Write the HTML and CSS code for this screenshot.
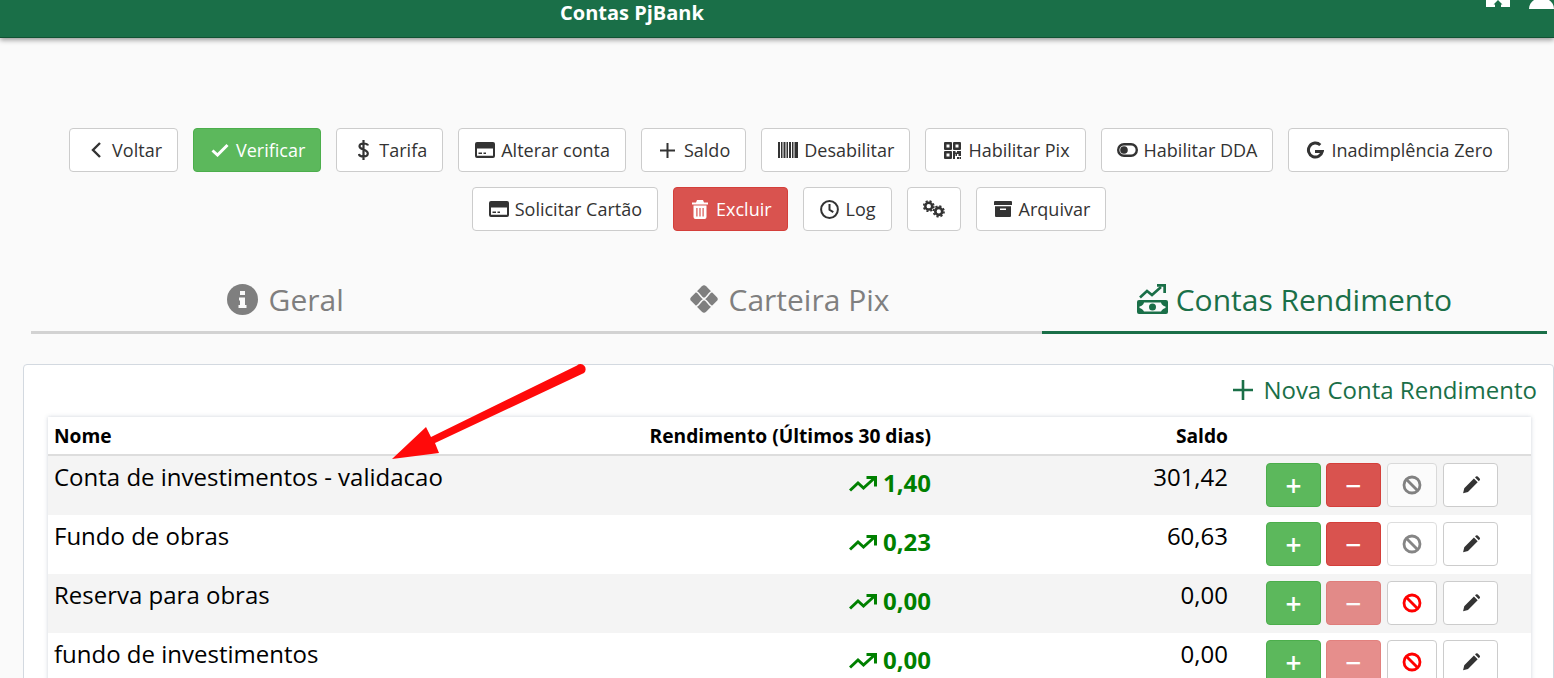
FILE: index.html
```html
<!DOCTYPE html>
<html lang="pt-BR">
<head>
  <meta charset="UTF-8">
  <title>Contas PjBank</title>
  <link rel="stylesheet" href="styles.css">
</head>
<body>
  <svg class="defs" width="0" height="0" aria-hidden="true">
    <symbol id="i-card" viewBox="0 0 20 16">
      <path fill="currentColor" fill-rule="evenodd" d="M2 0h16a2 2 0 0 1 2 2v12a2 2 0 0 1-2 2H2a2 2 0 0 1-2-2V2a2 2 0 0 1 2-2zM2 6.500v7.200h16V6.500zM3.500 10.500h3.500v1.600H3.500zM8.500 10.500h2.500v1.600H8.500z"/>
    </symbol>
    <symbol id="i-pencil" viewBox="0 0 24 24">
      <path fill="currentColor" d="M2.500 21.800l1.400-5.900L15.500 4.300l4.500 4.500L8.400 20.400zM16.900 2.900l1-1a1.600 1.600 0 0 1 2.200 0l2.300 2.300a1.600 1.600 0 0 1 0 2.200l-1 1z"/>
    </symbol>
    <symbol id="i-trend" viewBox="0 0 28 16">
      <path fill="none" stroke="currentColor" stroke-width="3" d="M1 14.500l8-7.500 5.500 5L25 2.500"/>
      <path fill="currentColor" d="M17.500 0H28v10.500h-3V3h-7.500z"/>
    </symbol>
    <symbol id="i-ban" viewBox="0 0 20 20">
      <circle cx="10" cy="10" r="8" fill="none" stroke="currentColor" stroke-width="2.800"/>
      <path stroke="currentColor" stroke-width="2.800" d="M4.500 4.500l11 11"/>
    </symbol>
  </svg>

  <header class="topbar">
    <h1 class="topbar-title">Contas PjBank</h1>
    <div class="topbar-icons">
      <svg width="24" height="8" viewBox="0 0 24 8"><path fill="#fff" d="M0 0h24v7H15V4.500h1.500L12 0 7.500 4.500H9V7H0z"/></svg>
      <svg width="25" height="9" viewBox="0 0 25 9"><path fill="#fff" d="M0 9C0 5 2 2 5 0h15c3 2 5 5 5 9z"/></svg>
    </div>
  </header>

  <main class="content">
    <div class="toolbar">
      <button class="btn">
        <span class="ico"><svg width="12" height="18" viewBox="0 0 12 18"><path fill="none" stroke="currentColor" stroke-width="2.400" d="M10 2L3 9l7 7"/></svg></span>Voltar
      </button>
      <button class="btn btn-green">
        <span class="ico"><svg width="18" height="14" viewBox="0 0 18 14"><path fill="none" stroke="currentColor" stroke-width="3" d="M1.500 7.500l5 4.500L16.500 2"/></svg></span>Verificar
      </button>
      <button class="btn">
        <span class="ico"><svg width="11" height="20" viewBox="0 0 11 20"><path fill="none" stroke="currentColor" stroke-width="2.200" d="M5.500 0v20M10 5.500C9.500 4 8 3.500 5.500 3.500 3 3.500 1.500 4.500 1.500 6.300c0 4 8.300 2.500 8.300 7.300 0 2-1.800 3-4.300 3-2.700 0-4.300-1-4.700-2.600"/></svg></span>Tarifa
      </button>
      <button class="btn">
        <span class="ico"><svg width="20" height="16"><use href="#i-card"/></svg></span>Alterar conta
      </button>
      <button class="btn">
        <span class="ico"><svg width="15" height="15" viewBox="0 0 15 15"><path stroke="currentColor" stroke-width="2" d="M7.500 0v15M0 7.500h15"/></svg></span>Saldo
      </button>
      <button class="btn">
        <span class="ico"><svg width="20" height="16" viewBox="0 0 20 16"><path fill="currentColor" d="M0 0h2v16H0zM3 0h1.500v16H3zM5.500 0h2v16h-2zM8.500 0h1.500v16H8.500zM11 0h2v16h-2zM14 0h1.500v16H14zM16.500 0h3.500v16h-3.500z"/></svg></span>Desabilitar
      </button>
      <button class="btn">
        <span class="ico"><svg width="17" height="17" viewBox="0 0 17 17"><path fill="currentColor" fill-rule="evenodd" d="M1 0h6a1 1 0 0 1 1 1v6a1 1 0 0 1-1 1H1a1 1 0 0 1-1-1V1a1 1 0 0 1 1-1zM2.500 2.500v3h3v-3zM10 0h6a1 1 0 0 1 1 1v6a1 1 0 0 1-1 1h-6a1 1 0 0 1-1-1V1a1 1 0 0 1 1-1zM11.500 2.500v3h3v-3zM1 9h6a1 1 0 0 1 1 1v6a1 1 0 0 1-1 1H1a1 1 0 0 1-1-1v-6a1 1 0 0 1 1-1zM2.500 11.500v3h3v-3zM9 9h2.500v1.500H13V9h4v5h-2.500v-2h-1.500v2H11.500v-2H11v5H9zM13 15h2v2h-2zM15.500 15H17v2h-1.500z"/></svg></span>Habilitar Pix
      </button>
      <button class="btn">
        <span class="ico"><svg width="21" height="14" viewBox="0 0 21 14"><path fill="currentColor" fill-rule="evenodd" d="M7 0h7a7 7 0 0 1 0 14H7A7 7 0 0 1 7 0zM14 2.400H7a4.600 4.600 0 0 0 0 9.200h7a4.600 4.600 0 0 0 0-9.200zM7 3.200a3.800 3.800 0 1 1 0 7.600 3.800 3.800 0 0 1 0-7.600z"/></svg></span>Habilitar DDA
      </button>
      <button class="btn">
        <span class="ico"><svg width="18" height="18" viewBox="0 0 18 18"><path fill="none" stroke="currentColor" stroke-width="3" d="M14.300 4a7 7 0 1 0 2 6.500H9"/></svg></span>Inadimplência Zero
      </button>
      <button class="btn">
        <span class="ico"><svg width="20" height="16"><use href="#i-card"/></svg></span>Solicitar Cartão
      </button>
      <button class="btn btn-red">
        <span class="ico"><svg width="16" height="19" viewBox="0 0 16 19"><path fill="currentColor" fill-rule="evenodd" d="M5 0h6l1 2.500h4v2H0v-2h4zM1.500 5.500h13V17a2 2 0 0 1-2 2h-9a2 2 0 0 1-2-2zM4.300 8v8.500h1.200V8zM7.400 8v8.500h1.200V8zM10.500 8v8.500h1.200V8z"/></svg></span>Excluir
      </button>
      <button class="btn">
        <span class="ico"><svg width="19" height="19" viewBox="0 0 19 19"><circle cx="9.500" cy="9.500" r="8.400" fill="none" stroke="currentColor" stroke-width="2"/><path fill="none" stroke="currentColor" stroke-width="2" d="M9.500 4v5.800l3.800 2.400"/></svg></span>Log
      </button>
      <button class="btn">
        <span class="ico ico-only"><svg width="23" height="18" viewBox="0 0 23 18"><circle cx="6" cy="6" r="3.600" fill="none" stroke="currentColor" stroke-width="2.600"/><circle cx="6" cy="6" r="5.300" fill="none" stroke="currentColor" stroke-width="1.800" stroke-dasharray="2.200 2"/><circle cx="16.500" cy="11.500" r="3.600" fill="none" stroke="currentColor" stroke-width="2.800"/><circle cx="16.500" cy="11.500" r="5.500" fill="none" stroke="currentColor" stroke-width="1.800" stroke-dasharray="2.300 2"/></svg></span>
      </button>
      <button class="btn">
        <span class="ico"><svg width="18" height="16" viewBox="0 0 18 16"><path fill="currentColor" fill-rule="evenodd" d="M1 0h16a1 1 0 0 1 1 1v3H0V1a1 1 0 0 1 1-1zM1 5.200h16V15a1 1 0 0 1-1 1H2a1 1 0 0 1-1-1zM6 7.500V9h6V7.500z"/></svg></span>Arquivar
      </button>
    </div>

    <nav class="tabs">
      <div class="tab">
        <svg class="tab-info" width="31" height="31" viewBox="0 0 31 31"><circle cx="15.500" cy="15.500" r="15.500" fill="currentColor"/><path fill="#fafafa" d="M13 7h5v4h-5zM12 13.500h6V21h1.500v3h-8v-3H13v-4.500h-1z"/></svg>
        Geral
      </div>
      <div class="tab">
        <svg width="32" height="32" viewBox="0 0 32 32"><rect x="5.500" y="5.500" width="21" height="21" rx="3" fill="currentColor" transform="rotate(45 16 16)"/><path fill="none" stroke="#fafafa" stroke-width="1.500" d="M7.500 8.500C11 8.500 13 15.500 16 15.500S21 8.500 24.500 8.500M7.500 23.500C11 23.500 13 16.500 16 16.500S21 23.500 24.500 23.500"/></svg>
        Carteira Pix
      </div>
      <div class="tab tab-active">
        <svg width="31" height="30" viewBox="0 0 31 30"><path fill="none" stroke="currentColor" stroke-width="2.600" d="M3 13.500l7-6.500 5 4 9-8"/><path fill="currentColor" d="M20 0h9v9h-2.700V2.700H20z"/><path fill="currentColor" fill-rule="evenodd" d="M2 16h27a2 2 0 0 1 2 2v10a2 2 0 0 1-2 2H2a2 2 0 0 1-2-2V18a2 2 0 0 1 2-2zM7 18.500c-.5 2-2 3.500-4.500 4v1.500c2 .5 3.500 1.500 4.500 3.500h17c1-2 2.500-3 4.500-3.500v-1.500c-2.500-.5-4-2-4.500-4zM15.500 19.500a3.500 3.500 0 1 1 0 7 3.500 3.500 0 0 1 0-7z"/></svg>
        Contas Rendimento
      </div>
    </nav>

    <section class="panel">
      <div class="panel-actions">
        <a class="new-link">
          <svg width="20" height="20" viewBox="0 0 20 20"><path stroke="currentColor" stroke-width="2.600" d="M10 0v20M0 10h20"/></svg>
          Nova Conta Rendimento
        </a>
      </div>
      <table class="accounts">
        <colgroup>
          <col class="col-name"><col class="col-yield"><col class="col-balance"><col>
        </colgroup>
        <thead>
          <tr><th>Nome</th><th class="num">Rendimento (Últimos 30 dias)</th><th class="num">Saldo</th><th></th></tr>
        </thead>
        <tbody>
          <tr>
            <td>Conta de investimentos - validacao</td>
            <td class="num yield"><svg width="28" height="16"><use href="#i-trend"/></svg> 1,40</td>
            <td class="num">301,42</td>
            <td><div class="row-actions">
              <button class="rbtn btn-green">+</button>
              <button class="rbtn btn-red">−</button>
              <button class="rbtn rbtn-ban off"><svg width="20" height="20"><use href="#i-ban"/></svg></button>
              <button class="rbtn"><svg width="20" height="20"><use href="#i-pencil"/></svg></button>
            </div></td>
          </tr>
          <tr>
            <td>Fundo de obras</td>
            <td class="num yield"><svg width="28" height="16"><use href="#i-trend"/></svg> 0,23</td>
            <td class="num">60,63</td>
            <td><div class="row-actions">
              <button class="rbtn btn-green">+</button>
              <button class="rbtn btn-red">−</button>
              <button class="rbtn rbtn-ban off"><svg width="20" height="20"><use href="#i-ban"/></svg></button>
              <button class="rbtn"><svg width="20" height="20"><use href="#i-pencil"/></svg></button>
            </div></td>
          </tr>
          <tr>
            <td>Reserva para obras</td>
            <td class="num yield"><svg width="28" height="16"><use href="#i-trend"/></svg> 0,00</td>
            <td class="num">0,00</td>
            <td><div class="row-actions">
              <button class="rbtn btn-green">+</button>
              <button class="rbtn btn-red faded">−</button>
              <button class="rbtn rbtn-ban danger"><svg width="20" height="20"><use href="#i-ban"/></svg></button>
              <button class="rbtn"><svg width="20" height="20"><use href="#i-pencil"/></svg></button>
            </div></td>
          </tr>
          <tr>
            <td>fundo de investimentos</td>
            <td class="num yield"><svg width="28" height="16"><use href="#i-trend"/></svg> 0,00</td>
            <td class="num">0,00</td>
            <td><div class="row-actions">
              <button class="rbtn btn-green">+</button>
              <button class="rbtn btn-red faded">−</button>
              <button class="rbtn rbtn-ban danger"><svg width="20" height="20"><use href="#i-ban"/></svg></button>
              <button class="rbtn"><svg width="20" height="20"><use href="#i-pencil"/></svg></button>
            </div></td>
          </tr>
        </tbody>
      </table>
    </section>
  </main>

  <!-- seta vermelha desenhada por cima da tabela -->
  <svg class="annotation" width="1554" height="678" viewBox="0 0 1554 678">
    <path fill="#ff0a0a" d="M392 459L426 427L431 437L577 365.500A4.500 4.500 0 0 1 584 373L435 443L439 453z"/>
  </svg>
</body>
</html>
```

FILE: styles.css
```css
html, body {
  height: 100%;
  overflow: hidden;
}
body {
  margin: 0;
  background: #fafafa;
  color: #333;
  font-family: "Open Sans", sans-serif;
  position: relative;
}
.defs {
  position: absolute;
}

.topbar {
  display: flex;
  justify-content: space-between;
  height: 37px;
  padding-left: 560px;
  background: #1a6f48;
  border-bottom: 1px solid #115233;
  box-shadow: 0 2px 5px rgba(0,0,0,0.4);
}
.topbar-title {
  margin: 0;
  font-size: 20px;
  line-height: 26px;
  font-weight: 700;
  color: #fff;
}
.topbar-icons {
  display: flex;
  align-items: flex-start;
  gap: 19px;
}

.content {
  padding: 90px 0 0 23px;
}
.toolbar {
  display: flex;
  flex-wrap: wrap;
  justify-content: center;
  gap: 15px;
  margin: 0 7px 0 8px;
}
.btn {
  display: flex;
  align-items: center;
  height: 44px;
  padding: 0 15px;
  background: #fff;
  border: 1px solid #ccc;
  border-radius: 4px;
  color: #333;
  font-family: inherit;
  font-size: 18px;
  cursor: pointer;
}
.btn .ico {
  display: flex;
  justify-content: center;
  align-items: center;
  width: 22px;
  margin-right: 5px;
}
.btn .ico-only {
  margin-right: 0;
}
.btn-green {
  background: #5cb85c;
  border: 1px solid #4cae4c;
  color: #fff;
}
.btn-red {
  background: #d9534f;
  border: 1px solid #d43f3a;
  color: #fff;
}

.tabs {
  display: flex;
  margin: 40px 7px 0 8px;
}
.tab {
  flex: 1;
  display: flex;
  justify-content: center;
  align-items: center;
  gap: 8px;
  height: 56px;
  padding-bottom: 4px;
  border-bottom: 3px solid #d2d2d2;
  color: #7f7f7f;
  font-size: 30px;
}
.tab-info {
  margin: 0 3px;
}
.tab-active {
  border-bottom-color: #1a6f48;
  color: #1a6f48;
}

.panel {
  margin-top: 30px;
  padding: 0 22px 20px 24px;
  background: #fff;
  border: 1px solid #d3d9e0;
  border-radius: 4px;
}
.panel-actions {
  display: flex;
  justify-content: flex-end;
  height: 52px;
  margin-right: -6px;
}
.new-link {
  display: flex;
  align-items: center;
  gap: 10px;
  height: 49px;
  color: #1a6f48;
  font-size: 24px;
}

.accounts {
  width: 100%;
  table-layout: fixed;
  border-collapse: collapse;
  box-shadow: 0 0 4px rgba(60,80,110,0.25);
  color: #000;
}
.col-name { width: 479px; }
.col-yield { width: 411px; }
.col-balance { width: 297px; }
.accounts th {
  height: 24px;
  padding: 7px 7px 6px;
  border-bottom: 2px solid #ddd;
  font-size: 19.2px;
  line-height: 24px;
  text-align: left;
}
.accounts td {
  padding: 7px;
  font-size: 24px;
  line-height: 28px;
  vertical-align: top;
}
.accounts th:first-child,
.accounts td:first-child {
  padding-left: 6px;
}
.accounts .num {
  text-align: right;
}
.accounts tbody tr:nth-child(odd) {
  background: #f4f4f4;
}
.accounts .yield {
  color: #008000;
  font-weight: 700;
  line-height: 40px;
}
.row-actions {
  display: flex;
  justify-content: center;
  gap: 6px;
  height: 45px;
  margin-right: 2px;
}
.rbtn {
  display: flex;
  justify-content: center;
  align-items: center;
  width: 55px;
  height: 44px;
  padding: 0;
  background: #fff;
  border: 1px solid #ccc;
  border-radius: 4px;
  color: #333;
  font-family: inherit;
  font-size: 28px;
  font-weight: 600;
  line-height: 1;
}
.rbtn.btn-green {
  background: #5cb85c;
  border-color: #4cae4c;
  color: #fff;
  margin-right: -1px;
}
.rbtn.btn-red {
  background: #d9534f;
  border-color: #d43f3a;
  color: #fff;
}
.rbtn.faded {
  opacity: 0.65;
}
.rbtn-ban {
  width: 50px;
}
.rbtn-ban.off {
  opacity: 0.65;
  color: #444;
}
.rbtn-ban.danger {
  color: #f00;
}

.annotation {
  position: absolute;
  top: 0;
  left: 0;
  pointer-events: none;
}
```
